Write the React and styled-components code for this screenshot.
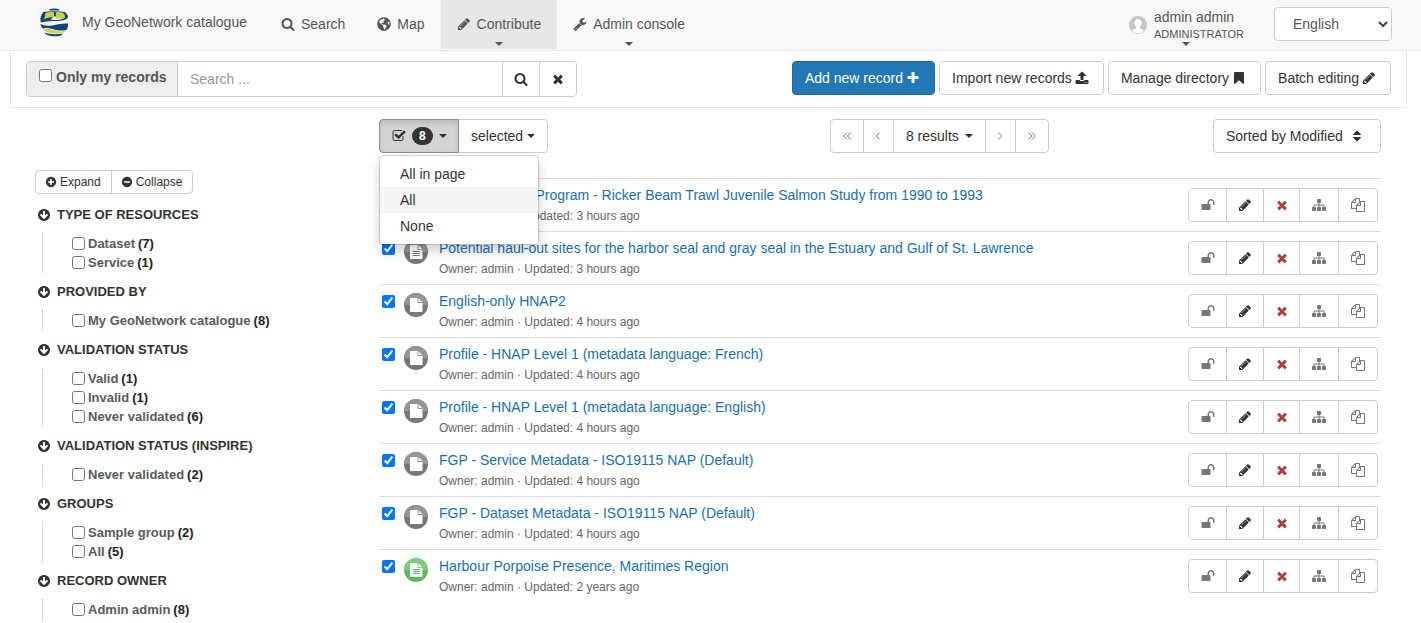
import React from "react";
import styled, { createGlobalStyle, css } from "styled-components";
import { FaGlobeAmericas } from "react-icons/fa";

const GlobalStyle = createGlobalStyle`
  *, *::before, *::after { box-sizing: border-box; }
  body {
    margin: 0;
    background: #fff;
    color: #333;
    font-family: "Liberation Sans", Arial, sans-serif;
    font-size: 14px;
    line-height: 20px;
  }
  button, input, select { font: inherit; color: inherit; margin: 0; }
  a { text-decoration: none; }
`;

const DISC =
  "m320-64q0 209-103 385.5t-279.5 279.5-385.5 103-385.5-103-279.5-279.5-103-385.5 103-385.5 279.5-279.5 385.5-103 385.5 103 279.5 279.5 103 385.5z";

const PATHS = {
  search:
    "M1216 832q0-185-131.5-316.5t-316.5-131.5-316.5 131.5-131.5 316.5 131.5 316.5 316.5 131.5 316.5-131.5 131.5-316.5zm512 832q0 52-38 90t-90 38q-54 0-90-38l-343-342q-179 124-399 124-143 0-273.5-55.5t-225-150-150-225-55.5-273.5 55.5-273.5 150-225 225-150 273.5-55.5 273.5 55.5 225 150 150 225 55.5 273.5q0 220-124 399l343 343q37 37 37 90z",
  pencil:
    "M491 1536l91-91-235-235-91 91v107h128v128h107zm523-928q0-22-22-22-10 0-17 7l-542 542q-7 7-7 17 0 22 22 22 10 0 17-7l542-542q7-7 7-17zm-54-192l416 416-832 832h-416v-416zm683 96q0 53-37 90l-166 166-416-416 166-165q36-38 90-38 53 0 91 38l235 234q37 39 37 91z",
  times:
    "M1490 1322q0 40-28 68l-136 136q-28 28-68 28t-68-28l-294-294-294 294q-28 28-68 28t-68-28l-136-136q-28-28-28-68t28-68l294-294-294-294q-28-28-28-68t28-68l136-136q28-28 68-28t68 28l294 294 294-294q28-28 68-28t68 28l136 136q28 28 28 68t-28 68l-294 294 294 294q28 28 28 68z",
  sitemap:
    "M1792 1248v320q0 40-28 68t-68 28h-320q-40 0-68-28t-28-68v-320q0-40 28-68t68-28h96v-192h-512v192h96q40 0 68 28t28 68v320q0 40-28 68t-68 28h-320q-40 0-68-28t-28-68v-320q0-40 28-68t68-28h96v-192h-512v192h96q40 0 68 28t28 68v320q0 40-28 68t-68 28h-320q-40 0-68-28t-28-68v-320q0-40 28-68t68-28h96v-192q0-52 38-90t90-38h512v-192h-96q-40 0-68-28t-28-68v-320q0-40 28-68t68-28h320q40 0 68 28t28 68v320q0 40-28 68t-68 28h-96v192h512q52 0 90 38t38 90v192h96q40 0 68 28t28 68z",
  files:
    "M1696 384q40 0 68 28t28 68v1216q0 40-28 68t-68 28h-960q-40 0-68-28t-28-68v-288h-544q-40 0-68-28t-28-68v-672q0-40 20-88t48-76l408-408q28-28 76-48t88-20h416q40 0 68 28t28 68v328q68-40 128-40h416zm-544 213l-299 299h299v-299zm-640-384l-299 299h299v-299zm196 647l316-316v-416h-384v416q0 40-28 68t-68 28h-416v640h512v-256q0-40 20-88t48-76zm956 804v-1152h-384v416q0 40-28 68t-68 28h-416v640h896z",
  bookmark:
    "M1420 128q23 0 44 9 33 13 52.500 41t19.500 62v1289q0 34-19.500 62t-52.500 41q-19 8-44 8-48 0-83-32l-441-424-441 424q-36 33-83 33-23 0-44-9-33-13-52.500-41t-19.500-62v-1289q0-34 19.500-62t52.500-41q21-9 44-9h1048z",
  plus: "M1600 736v192q0 40-28 68t-68 28h-416v416q0 40-28 68t-68 28h-192q-40 0-68-28t-28-68v-416h-416q-40 0-68-28t-28-68v-192q0-40 28-68t68-28h416v-416q0-40 28-68t68-28h192q40 0 68 28t28 68v416h416q40 0 68 28t28 68z",
  upload:
    "M1344 1472q0-26-19-45t-45-19-45 19-19 45 19 45 45 19 45-19 19-45zm256 0q0-26-19-45t-45-19-45 19-19 45 19 45 45 19 45-19 19-45zm128-224v320q0 40-28 68t-68 28h-1472q-40 0-68-28t-28-68v-320q0-40 28-68t68-28h427q21 56 70.5 92t110.5 36h256q61 0 110.5-36t70.5-92h427q40 0 68 28t28 68zm-325-648q-17 40-59 40h-256v448q0 26-19 45t-45 19h-256q-26 0-45-19t-19-45v-448h-256q-42 0-59-40-17-39 14-69l448-448q18-19 45-19t45 19l448 448q31 30 14 69z",
  plusCircle:
    "M1344 960v-128q0-26-19-45t-45-19h-256v-256q0-26-19-45t-45-19h-128q-26 0-45 19t-19 45v256h-256q-26 0-45 19t-19 45v128q0 26 19 45t45 19h256v256q0 26 19 45t45 19h128q26 0 45-19t19-45v-256h256q26 0 45-19t19-45z" + DISC,
  minusCircle:
    "M1344 960v-128q0-26-19-45t-45-19h-768q-26 0-45 19t-19 45v128q0 26 19 45t45 19h768q26 0 45-19t19-45z" + DISC,
  arrowDown:
    "M1412 897q0-27-18-45l-91-91q-18-18-45-18t-45 18l-189 189v-502q0-26-19-45t-45-19h-128q-26 0-45 19t-19 45v502l-189-189q-19-19-45-19t-45 19l-91 91q-18 18-18 45t18 45l362 362 91 91q18 18 45 18t45-18l91-91 362-362q18-18 18-45zm252-1q0 209-103 385.5t-279.5 279.5-385.5 103-385.5-103-279.5-279.5-103-385.5 103-385.5 279.5-279.5 385.5-103 385.5 103 279.5 279.5 103 385.5z",
  unlock:
    "M1728 576v256q0 26-19 45t-45 19h-64q-26 0-45-19t-19-45v-256q0-106-75-181t-181-75-181 75-75 181v192h96q40 0 68 28t28 68v576q0 40-28 68t-68 28h-960q-40 0-68-28t-28-68v-576q0-40 28-68t68-28h672v-192q0-185 131.5-316.5t316.5-131.5 316.5 131.5 131.5 316.5z",
  checkSquare:
    "M1472 930v318q0 119-84.5 203.5t-203.5 84.5h-832q-119 0-203.5-84.5t-84.5-203.5v-832q0-119 84.5-203.5t203.5-84.5h832q63 0 117 25 15 7 18 23 3 17-9 29l-49 49q-10 10-23 10-3 0-9-2-23-6-45-6h-832q-66 0-113 47t-47 113v832q0 66 47 113t113 47h832q66 0 113-47t47-113v-254q0-13 9-22l64-64q10-10 23-10 6 0 12 3 20 8 20 29zm231-489l-814 814q-24 24-57 24t-57-24l-430-430q-24-24-24-57t24-57l110-110q24-24 57-24t57 24l263 263 647-647q24-24 57-24t57 24l110 110q24 24 24 57t-24 57z",
  wrench:
    "M448 1472q0-26-19-45t-45-19-45 19-19 45 19 45 45 19 45-19 19-45zm644-420l-682 682q-37 37-90 37-52 0-91-37l-106-108q-38-36-38-90 0-53 38-91l681-681q39 98 114.5 173.5t173.5 114.5zm634-435q0 39-23 106-47 134-164.5 217.5t-258.5 83.5q-185 0-316.5-131.5t-131.5-316.5 131.5-316.5 316.5-131.5q58 0 121.5 16.5t107.5 46.5q16 11 16 28t-16 28l-293 169v224l193 107q5-3 79-48.5t135.5-81 70.5-35.5q15 0 23.5 10t8.500 25z",
  sort: "M1408 1088q0 26-19 45l-448 448q-19 19-45 19t-45-19l-448-448q-19-19-19-45t19-45 45-19h896q26 0 45 19t19 45zm0-384q0 26-19 45t-45 19h-896q-26 0-45-19t-19-45 19-45l448-448q19-19 45-19t45 19l448 448q19 19 19 45z",
};

const Glyph = styled.svg`
  display: block;
  flex: none;
  width: ${(p) => p.$size}px;
  height: ${(p) => p.$size}px;
  fill: currentColor;
`;

const Icon = ({ name, size = 14 }) => (
  <Glyph $size={size} viewBox="0 0 1792 1792" aria-hidden="true">
    <path d={PATHS[name]} />
  </Glyph>
);

const Chevrons = styled.svg`
  display: block;
  width: 8px;
  height: 8px;
  fill: none;
  stroke: #777;
`;

const CHEVRON_PATHS = {
  first: "M4 .5L.8 4L4 7.500M7.500 .5L4.300 4L7.500 7.500",
  previous: "M5.500 .5L2.200 4L5.500 7.500",
  next: "M2.500 .5L5.800 4L2.500 7.500",
  last: "M.5 .5L3.700 4L.5 7.500M4 .5L7.200 4L4 7.500",
};

const Caret = styled.span`
  width: 8px;
  border: 4px solid transparent;
  border-top-color: currentColor;
  border-bottom: 0;
`;

/* Top navigation */

const NavBar = styled.header`
  display: flex;
  height: 51px;
  padding: 0 29px 0 38px;
  background: #f8f8f8;
  border-bottom: 1px solid #e7e7e7;
  color: #555;
`;

const Brand = styled.a`
  display: flex;
  align-items: center;
  gap: 12px;
  width: 227px;
  height: 44px;
  color: #555;
  white-space: nowrap;
`;

const NavLink = styled.a`
  display: flex;
  flex-direction: column;
  align-items: center;
  height: 49px;
  padding: 14px 16px 0;
  gap: 8px;
  color: #555;
  white-space: nowrap;
  background: ${(p) => (p.$active ? "#e7e7e7" : "transparent")};
`;

const NavText = styled.span`
  display: flex;
  align-items: center;
  gap: 6px;
`;

const User = styled.a`
  display: flex;
  align-items: flex-start;
  gap: 7px;
  height: 50px;
  margin-left: auto;
  padding-top: 8px;
  color: #555;
`;

const Avatar = styled.svg`
  width: 18px;
  height: 18px;
  margin-top: 8px;
`;

const UserText = styled.span`
  display: flex;
  flex-direction: column;
`;

const UserName = styled.span`
  line-height: 18px;
`;

const UserRole = styled.span`
  font-size: 11px;
  line-height: 16px;
  text-transform: uppercase;
`;

const UserCaret = styled(Caret)`
  margin-left: 28px;
`;

const SelectWrap = styled.label`
  display: grid;
  align-items: center;
  height: 34px;
  margin: 7px 0 0 30px;
`;

const Select = styled.select`
  grid-area: 1 / 1;
  width: 118px;
  height: 34px;
  padding: 0 18px 0 16px;
  text-indent: 2px;
  appearance: none;
  background: #fff;
  border: 1px solid #ccc;
  border-radius: 4px;
  color: #555;
`;

const SelectArrow = styled.svg`
  grid-area: 1 / 1;
  justify-self: end;
  width: 10px;
  height: 8px;
  margin-right: 4px;
  pointer-events: none;
`;

/* Search bar */

const SearchBar = styled.section`
  display: flex;
  justify-content: space-between;
  gap: 16px;
  height: 57px;
  margin: 0 14px 0 10px;
  padding: 10px 15px;
  border: 1px solid #e7e7e7;
  border-top: 0;
`;

const SearchGroup = styled.form`
  display: flex;
  flex: 0 1 551px;
  height: 36px;
  border: 1px solid #ccc;
  border-radius: 4px;
  overflow: hidden;
`;

const OnlyMine = styled.label`
  display: flex;
  align-items: flex-start;
  gap: 4px;
  flex: none;
  width: 150px;
  padding: 5px 0 0 12px;
  background: #eee;
  color: #555;
  font-weight: bold;
  white-space: nowrap;
`;

const Checkbox = styled.input.attrs({ type: "checkbox" })`
  flex: none;
  width: 13px;
  height: 13px;
`;

const OnlyMineBox = styled(Checkbox)`
  margin-top: 2px;
`;

const SearchInput = styled.input`
  flex: 1;
  min-width: 0;
  padding: 0 12px;
  border: 0;
  border-left: 1px solid #ccc;
  outline: 0;
  &::placeholder { color: #999; opacity: 1; }
`;

const SearchButton = styled.button`
  display: flex;
  align-items: center;
  justify-content: center;
  width: 36px;
  padding: 0;
  background: #fff;
  border: 0;
  border-left: 1px solid #ccc;
  box-sizing: content-box;
`;

const Actions = styled.div`
  display: flex;
  gap: 4px;
`;

const Button = styled.button`
  display: flex;
  align-items: center;
  gap: 2px;
  height: 34px;
  padding: 0 12px;
  background: #fff;
  border: 1px solid #ccc;
  border-radius: 4px;
  white-space: nowrap;
`;

const ToolButton = styled(Button)`
  gap: 3px;
  padding: 0 14px 0 12px;
  ${(p) =>
    p.$primary &&
    css`
      background: #2277b4;
      border-color: #1e6a9f;
      color: #fff;
    `}
`;

/* Facets */

const Page = styled.main`
  display: flex;
  padding: 11px 40px 2px 35px;
`;

const Sidebar = styled.aside`
  flex: 0 0 344px;
  padding-top: 51px;
`;

const ButtonGroup = styled.div`
  display: flex;
  width: max-content;
  button { border-radius: 0; }
  button + button { margin-left: -1px; }
  > button:first-child { border-radius: 4px 0 0 4px; }
  > button:last-child { border-radius: 0 4px 4px 0; }
`;

const SmallButton = styled(Button)`
  height: 24px;
  padding: 0 10px 0 9px;
  gap: 3px;
  font-size: 12px;
`;

const Facets = styled.div`
  display: flex;
  flex-direction: column;
  gap: 8px;
  padding-top: 11px;
`;

const FacetHeading = styled.h2`
  display: flex;
  align-items: center;
  gap: 6px;
  margin: 0;
  padding-left: 2px;
  font-size: 13px;
  line-height: 20px;
  font-weight: bold;
  text-transform: uppercase;
`;

const FacetBody = styled.div`
  margin-left: 7px;
  padding: 1px 0 2px 29px;
  border-left: 1px dotted #bbb;
`;

const FacetItem = styled.label`
  display: flex;
  align-items: center;
  gap: 3px;
  height: 19px;
  font-size: 13px;
  font-weight: bold;
  color: #5a5a5a;
`;

const Count = styled.span`
  color: #222;
`;

/* Records */

const Results = styled.section`
  flex: 1;
  min-width: 0;
`;

const Toolbar = styled.div`
  display: grid;
  grid-template-columns: 45% 1fr auto;
  height: 34px;
  margin-bottom: 25px;
`;

const Selection = styled.div`
  position: relative;
`;

const SelectionToggle = styled(Button)`
  gap: 6px;
  width: 80px;
  background: #d4d4d4;
  border-color: #8c8c8c;
  box-shadow: inset 0 3px 5px rgba(0, 0, 0, 0.12);
  z-index: 1;
`;

const Badge = styled.span`
  padding: 3px 7px;
  border-radius: 10px;
  background: #333;
  color: #fff;
  font-size: 12px;
  font-weight: bold;
  line-height: 12px;
`;

const CaretButton = styled(Button)`
  gap: ${(p) => p.$gap}px;
`;

const Menu = styled.ul`
  position: absolute;
  top: 36px;
  left: 0;
  z-index: 2;
  width: 160px;
  margin: 0;
  padding: 5px 0;
  list-style: none;
  background: #fff;
  background-clip: padding-box;
  border: 1px solid rgba(0, 0, 0, 0.15);
  border-radius: 4px;
  box-shadow: 0 6px 12px rgba(0, 0, 0, 0.175);
`;

const MenuLink = styled.a`
  display: block;
  padding: 3px 20px;
  color: #333;
  background: ${(p) => (p.$hovered ? "#f5f5f5" : "transparent")};
`;

const PagerButton = styled(Button)`
  justify-content: center;
  width: ${(p) => p.$width}px;
  padding: 0;
`;

const SortButton = styled(Button)`
  gap: 7px;
  width: 168px;
`;

const RecordList = styled.ul`
  margin: 0;
  padding: 0;
  list-style: none;
`;

const Record = styled.li`
  display: flex;
  align-items: flex-start;
  height: 53px;
  padding: 9px 3px 0;
  border-top: 1px solid #ddd;
`;

const RecordCheckbox = styled(Checkbox)`
  margin: 1px 9px 0 0;
`;

const Status = styled.svg`
  flex: none;
  width: 24px;
  height: 24px;
  margin: -1px 11px 0 0;
`;

const RecordText = styled.div`
  flex: 1;
  min-width: 0;
  white-space: nowrap;
`;

const RecordTitle = styled.a`
  display: block;
  margin-top: -3px;
  color: #1a6fae;
`;

const RecordMeta = styled.div`
  padding-top: 3px;
  font-size: 12px;
  line-height: 16px;
  color: #666;
`;

const ActionButton = styled(Button)`
  justify-content: center;
  width: ${(p) => p.$width}px;
  padding: 0;
  color: ${(p) => p.$color};
`;

const Logo = () => (
  <svg width="32" height="30" viewBox="0 0 32 30" aria-hidden="true">
    <path fill="#0e4478" d="M11.500 2Q16.500 .8 21 2V3.500H11.500z" />
    <path fill="#0e4478" d="M5.500 5Q16 3.500 27 5Q30 7.500 30 10.500Q28 13.500 20 14Q8 13.500 2.700 15.500Q1.500 9 5.500 5z" />
    <path fill="#cdd046" d="M7 6.500Q10 4.800 16 5.200V10Q9 10.500 5 12.500Q8 9.500 7 6.500z" />
    <path fill="#cdd046" d="M17.800 5.200Q23 4.800 26 6.500Q28 9 26.500 11.500Q22 13 18 12.500z" />
    <path fill="#fff" d="M15.500 9.500H18V11.500Q22 12 26 11.500Q19 14 12 12.300Q14.500 11.500 15.500 9.500z" />
    <path fill="#0e4478" d="M2.300 17Q7 19.500 14 18.500Q24 16 30 16.500Q30.500 20.500 28.500 23Q22 24.500 14 22Q8 20.500 4.500 21.500Q2.800 19.500 2.300 17z" />
    <path fill="#cdd046" d="M5 22.500Q9 21 14.500 23Q21 25.200 27.500 24Q25 26.500 19 26.500Q9 26.800 5 22.500z" />
    <path fill="#0e4478" d="M6 25.500Q13 28 25 26.700Q23.500 29.200 16.500 29.300Q9 29.300 6 25.500z" />
  </svg>
);

const StatusIcon = ({ green, lined }) => (
  <Status viewBox="0 0 24 24" aria-hidden="true">
    <circle cx="12" cy="12" r="12" fill={green ? "#5cb85c" : "#777"} />
    <path d="M0 12a12 12 0 0 1 24 0z" fill={green ? "#80ca80" : "#959595"} />
    <path d="M7 5h6.500v4.300q0 .7.7.7h4.300v8.300a.8.8 0 0 1-.8.8h-10.900a.8.8 0 0 1-.8-.8v-12.500a.8.8 0 0 1 .8-.8zM14.500 5.200l3.800 3.800h-3.800z" fill="#fff" />
    {lined && (
      <path d="M8.800 11.500h7M8.800 13.500h7M8.800 15.500h7" stroke={green ? "#5cb85c" : "#777"} fill="none" />
    )}
  </Status>
);

const FACETS = [
  { title: "Type of resources", items: [["Dataset", 7], ["Service", 1]] },
  { title: "Provided by", items: [["My GeoNetwork catalogue", 8]] },
  { title: "Validation status", items: [["Valid", 1], ["Invalid", 1], ["Never validated", 6]] },
  { title: "Validation status (INSPIRE)", items: [["Never validated", 2]] },
  { title: "Groups", items: [["Sample group", 2], ["All", 5]] },
  { title: "Record owner", items: [["Admin admin", 8]] },
];

const RECORDS = [
  { title: "Pacific Salmon Program - Ricker Beam Trawl Juvenile Salmon Study from 1990 to 1993", age: "3 hours", lined: true },
  { title: "Potential haul-out sites for the harbor seal and gray seal in the Estuary and Gulf of St. Lawrence", age: "3 hours", lined: true },
  { title: "English-only HNAP2", age: "4 hours" },
  { title: "Profile - HNAP Level 1 (metadata language: French)", age: "4 hours" },
  { title: "Profile - HNAP Level 1 (metadata language: English)", age: "4 hours" },
  { title: "FGP - Service Metadata - ISO19115 NAP (Default)", age: "4 hours" },
  { title: "FGP - Dataset Metadata - ISO19115 NAP (Default)", age: "4 hours" },
  { title: "Harbour Porpoise Presence, Maritimes Region", age: "2 years", lined: true, green: true },
];

const RECORD_ACTIONS = [
  { icon: "unlock", label: "Privileges", width: 39, color: "#777" },
  { icon: "pencil", label: "Edit", width: 38, color: "#333" },
  { icon: "times", label: "Delete", width: 37, color: "#a94442" },
  { icon: "sitemap", label: "Create child record", width: 40, color: "#777" },
  { icon: "files", label: "Duplicate", width: 40, color: "#777" },
];

const PagerStep = ({ step, width }) => (
  <PagerButton type="button" aria-label={step} $width={width}>
    <Chevrons viewBox="0 0 8 8"><path d={CHEVRON_PATHS[step]} /></Chevrons>
  </PagerButton>
);

export default function App() {
  return (
    <>
      <GlobalStyle />
      <NavBar>
        <Brand href="#home"><Logo />My GeoNetwork catalogue</Brand>
        <NavLink href="#search"><NavText><Icon name="search" />Search</NavText></NavLink>
        <NavLink href="#map"><NavText><FaGlobeAmericas size={14} />Map</NavText></NavLink>
        <NavLink href="#contribute" $active><NavText><Icon name="pencil" />Contribute</NavText><Caret /></NavLink>
        <NavLink href="#admin"><NavText><Icon name="wrench" />Admin console</NavText><Caret /></NavLink>
        <User href="#user">
          <Avatar viewBox="0 0 18 18" aria-hidden="true">
            <circle cx="9" cy="9" r="9" fill="#c6c6c6" />
            <path fill="#fff" d="M9 3a3.700 3.700 0 0 1 3.700 4q0 2.500-1.700 4v1.500q3 .8 4 2.500A9 9 0 0 1 3 15q1-1.700 4-2.500V11Q5.300 9.500 5.300 7A3.700 3.700 0 0 1 9 3z" />
          </Avatar>
          <UserText>
            <UserName>admin admin</UserName>
            <UserRole>Administrator</UserRole>
            <UserCaret />
          </UserText>
        </User>
        <SelectWrap>
          <Select aria-label="Language" defaultValue="en"><option value="en">English</option></Select>
          <SelectArrow viewBox="0 0 10 8"><path d="M1 2l4 4 4-4" fill="none" stroke="#444" strokeWidth="2" /></SelectArrow>
        </SelectWrap>
      </NavBar>

      <SearchBar>
        <SearchGroup>
          <OnlyMine><OnlyMineBox />Only my records</OnlyMine>
          <SearchInput type="text" placeholder="Search ..." aria-label="Search" />
          <SearchButton type="button" aria-label="Search"><Icon name="search" /></SearchButton>
          <SearchButton type="button" aria-label="Clear"><Icon name="times" /></SearchButton>
        </SearchGroup>
        <Actions>
          <ToolButton type="button" $primary>Add new record<Icon name="plus" /></ToolButton>
          <ToolButton type="button">Import new records<Icon name="upload" /></ToolButton>
          <ToolButton type="button">Manage directory<Icon name="bookmark" /></ToolButton>
          <ToolButton type="button">Batch editing<Icon name="pencil" /></ToolButton>
        </Actions>
      </SearchBar>

      <Page>
        <Sidebar>
          <ButtonGroup>
            <SmallButton type="button"><Icon name="plusCircle" size={12} />Expand</SmallButton>
            <SmallButton type="button"><Icon name="minusCircle" size={12} />Collapse</SmallButton>
          </ButtonGroup>
          <Facets>
            {FACETS.map((facet) => (
              <React.Fragment key={facet.title}>
                <FacetHeading><Icon name="arrowDown" />{facet.title}</FacetHeading>
                <FacetBody>
                  {facet.items.map(([label, count]) => (
                    <FacetItem key={label}><Checkbox />{label}<Count>({count})</Count></FacetItem>
                  ))}
                </FacetBody>
              </React.Fragment>
            ))}
          </Facets>
        </Sidebar>

        <Results>
          <Toolbar>
            <Selection>
              <ButtonGroup>
                <SelectionToggle type="button" aria-label="Selection" aria-expanded="true">
                  <Icon name="checkSquare" /><Badge>8</Badge><Caret />
                </SelectionToggle>
                <CaretButton type="button" $gap={4}>selected<Caret /></CaretButton>
              </ButtonGroup>
              <Menu>
                <li><MenuLink href="#page">All in page</MenuLink></li>
                <li><MenuLink href="#all" $hovered>All</MenuLink></li>
                <li><MenuLink href="#none">None</MenuLink></li>
              </Menu>
            </Selection>
            <ButtonGroup>
              <PagerStep step="first" width={34} />
              <PagerStep step="previous" width={31} />
              <CaretButton type="button" $gap={6}>8 results<Caret /></CaretButton>
              <PagerStep step="next" width={31} />
              <PagerStep step="last" width={34} />
            </ButtonGroup>
            <SortButton type="button">Sorted by Modified<Icon name="sort" /></SortButton>
          </Toolbar>
          <RecordList>
            {RECORDS.map((record) => (
              <Record key={record.title}>
                <RecordCheckbox defaultChecked aria-label={record.title} />
                <StatusIcon green={record.green} lined={record.lined} />
                <RecordText>
                  <RecordTitle href="#record">{record.title}</RecordTitle>
                  <RecordMeta>Owner: admin · Updated: {record.age} ago</RecordMeta>
                </RecordText>
                <ButtonGroup>
                  {RECORD_ACTIONS.map((a) => (
                    <ActionButton key={a.icon} type="button" aria-label={a.label} $width={a.width} $color={a.color}>
                      <Icon name={a.icon} />
                    </ActionButton>
                  ))}
                </ButtonGroup>
              </Record>
            ))}
          </RecordList>
        </Results>
      </Page>
    </>
  );
}
